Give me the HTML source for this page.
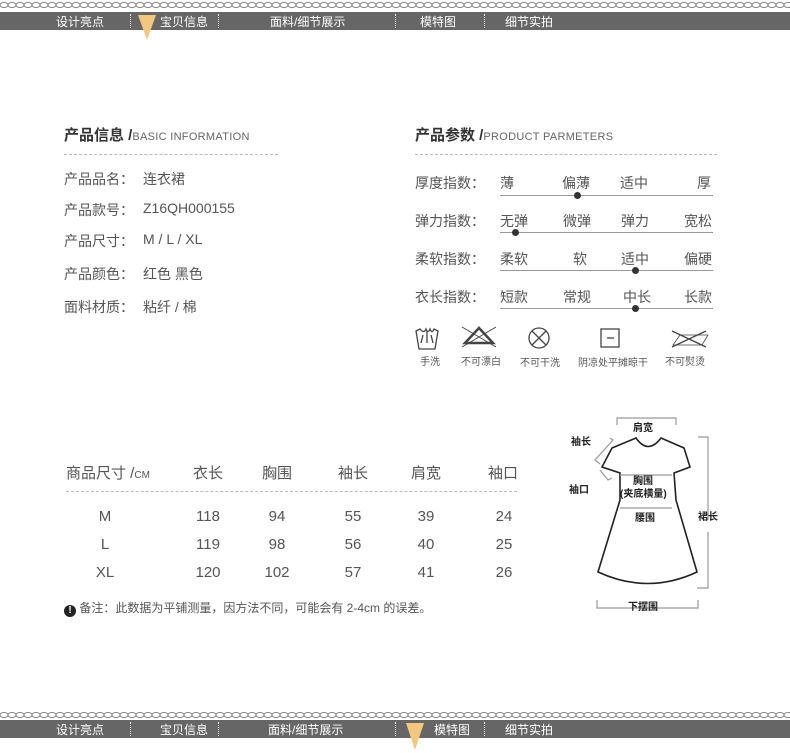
<!DOCTYPE html><html><head><meta charset="utf-8"><style>
body{margin:0;width:790px;height:753px;background:#fff;position:relative;overflow:hidden;font-family:"Liberation Sans","Noto Sans CJK SC",sans-serif;color:#555}
.a{position:absolute;white-space:nowrap}
.bar{position:absolute;left:0;width:790px;height:18px;background:#666;color:#fff;font-size:12px}
.bar span{position:absolute;top:1px}
.sep{position:absolute;top:2px;height:14px;border-left:1px dotted #eee}
.t14{font-size:14px}
.h{font-size:15px;font-weight:bold;color:#333}
.h small{font-size:11px;font-weight:normal;color:#666;letter-spacing:.3px}
.dash{position:absolute;border-top:1px dashed #bbb;height:0}
.ln{position:absolute;height:1px;background:#999;left:500px;width:213px}
.dot{position:absolute;width:7px;height:7px;border-radius:50%;background:#333}
.c{position:absolute;text-align:center;width:60px;font-size:15px}
.v{position:absolute;left:79px;top:0}
</style></head><body>
<svg class="a" style="left:0;top:0" width="790" height="11"><defs><pattern id="ch" width="8" height="10" patternUnits="userSpaceOnUse"><ellipse cx="4" cy="5" rx="4" ry="2.6" fill="none" stroke="#888" stroke-width="1"/></pattern></defs><rect width="790" height="11" fill="url(#ch)"/></svg>
<div class="bar" style="top:12px"><span style="left:56px">设计亮点</span><i class="sep" style="left:130px"></i><span style="left:160px">宝贝信息</span><i class="sep" style="left:218px"></i><span style="left:270px">面料/细节展示</span><i class="sep" style="left:395px"></i><span style="left:420px">模特图</span><i class="sep" style="left:484px"></i><span style="left:505px">细节实拍</span></div>
<svg class="a" style="left:136px;top:12px" width="22" height="30"><polygon points="2,3 20,3 11,28" fill="#f3c77e"/></svg>

<div class="a h" style="left:64px;top:124px">产品信息 /<small>BASIC INFORMATION</small></div>
<div class="dash" style="left:64px;top:154px;width:214px"></div>
<div class="a t14" style="left:64px;top:169px;width:300px">产品品名：<span class="v">连衣裙</span></div>
<div class="a t14" style="left:64px;top:200px;width:300px">产品款号：<span class="v">Z16QH000155</span></div>
<div class="a t14" style="left:64px;top:231px;width:300px">产品尺寸：<span class="v">M / L / XL</span></div>
<div class="a t14" style="left:64px;top:264px;width:300px">产品颜色：<span class="v">红色 黑色</span></div>
<div class="a t14" style="left:64px;top:297px;width:300px">面料材质：<span class="v">粘纤 / 棉</span></div>

<div class="a h" style="left:415px;top:124px">产品参数 /<small>PRODUCT PARMETERS</small></div>
<div class="dash" style="left:415px;top:154px;width:302px"></div>
<div class="a t14" style="left:415px;top:173px">厚度指数：</div><div class="a t14" style="left:500px;top:173px">薄</div><div class="a t14" style="left:562px;top:173px">偏薄</div><div class="a t14" style="left:620px;top:173px">适中</div><div class="a t14" style="left:697px;top:173px">厚</div>
<div class="ln" style="top:195px"></div><div class="dot" style="left:574px;top:192px"></div>
<div class="a t14" style="left:415px;top:211px">弹力指数：</div><div class="a t14" style="left:500px;top:211px">无弹</div><div class="a t14" style="left:563px;top:211px">微弹</div><div class="a t14" style="left:621px;top:211px">弹力</div><div class="a t14" style="left:684px;top:211px">宽松</div>
<div class="ln" style="top:232px"></div><div class="dot" style="left:512px;top:229px"></div>
<div class="a t14" style="left:415px;top:249px">柔软指数：</div><div class="a t14" style="left:500px;top:249px">柔软</div><div class="a t14" style="left:573px;top:249px">软</div><div class="a t14" style="left:621px;top:249px">适中</div><div class="a t14" style="left:684px;top:249px">偏硬</div>
<div class="ln" style="top:270px"></div><div class="dot" style="left:632px;top:267px"></div>
<div class="a t14" style="left:415px;top:287px">衣长指数：</div><div class="a t14" style="left:500px;top:287px">短款</div><div class="a t14" style="left:563px;top:287px">常规</div><div class="a t14" style="left:623px;top:287px">中长</div><div class="a t14" style="left:684px;top:287px">长款</div>
<div class="ln" style="top:308px"></div><div class="dot" style="left:632px;top:305px"></div>

<svg class="a" style="left:410px;top:325px" width="310" height="45" fill="none" stroke="#444" stroke-width="1.3">
<path d="M6,6 L10,4 Q14,9 16,4 Q18,9 20,4 Q22,9 24,4 L28,6 L25,24 H9 Z"/><path d="M17,6 V18 M13,10 L11,18 M21,10 L23,18"/>
<path d="M55,18 L69,3 L83,18 Z" stroke-width="2.5"/><path d="M52,2 L86,22 M52,22 L86,2" stroke-width="1"/>
<circle cx="129" cy="13" r="10"/><path d="M122,6 L136,20 M136,6 L122,20"/>
<rect x="191" y="4" width="18" height="18"/><path d="M197,13 H204"/>
<path d="M263,20 L270,10 H298 L292,20 Z" stroke-width="0.8"/><path d="M262,6 L296,22 M262,22 L296,6"/>
</svg>
<div class="a" style="font-size:10px;left:420px;top:353px">手洗</div>
<div class="a" style="font-size:10px;left:461px;top:353px">不可漂白</div>
<div class="a" style="font-size:10px;left:520px;top:354px">不可干洗</div>
<div class="a" style="font-size:10px;left:578px;top:354px">阴凉处平摊晾干</div>
<div class="a" style="font-size:10px;left:665px;top:353px">不可熨烫</div>

<div class="a" style="left:66px;top:462px;font-size:15px">商品尺寸 /<span style="font-size:10px">CM</span></div>
<div class="c" style="left:178px;top:462px">衣长</div><div class="c" style="left:247px;top:462px">胸围</div><div class="c" style="left:323px;top:462px">袖长</div><div class="c" style="left:396px;top:462px">肩宽</div><div class="c" style="left:473px;top:462px">袖口</div>
<div class="dash" style="left:66px;top:491px;width:451px"></div>
<div class="c" style="left:75px;top:508px">M</div><div class="c" style="left:178px;top:508px">118</div><div class="c" style="left:247px;top:508px">94</div><div class="c" style="left:323px;top:508px">55</div><div class="c" style="left:396px;top:508px">39</div><div class="c" style="left:474px;top:508px">24</div>
<div class="c" style="left:75px;top:536px">L</div><div class="c" style="left:178px;top:536px">119</div><div class="c" style="left:247px;top:536px">98</div><div class="c" style="left:323px;top:536px">56</div><div class="c" style="left:396px;top:536px">40</div><div class="c" style="left:474px;top:536px">25</div>
<div class="c" style="left:75px;top:564px">XL</div><div class="c" style="left:178px;top:564px">120</div><div class="c" style="left:247px;top:564px">102</div><div class="c" style="left:323px;top:564px">57</div><div class="c" style="left:396px;top:564px">41</div><div class="c" style="left:474px;top:564px">26</div>
<div class="a" style="left:64px;top:599px;font-size:12px"><span style="display:inline-block;width:12px;height:12px;border-radius:50%;background:#222;color:#fff;font-size:10px;text-align:center;line-height:12px;font-weight:bold;vertical-align:-1px">!</span> 备注：此数据为平铺测量，因方法不同，可能会有 2-4cm 的误差。</div>

<svg class="a" style="left:560px;top:410px" width="170" height="210" fill="none" stroke="#222" stroke-width="1.6" font-family="Liberation Sans,Noto Sans CJK SC,sans-serif" font-size="10" font-weight="bold">
<path d="M76,28 Q88,45 101,28 L124,38 L130,57 L114,63 L116,90 L137,162 Q88,185 38,162 L60,90 L60,63 L42,57 L52,38 Z"/>
<g stroke="#999" stroke-width="1.2"><path d="M57,15 V8 H116 V15"/><path d="M60,65 H112 M60,98 H112"/><path d="M50,28 L53,30 L35,50 L40,54"/><path d="M40,60 L48,70 L52,68"/><path d="M138,27 H148 V110 M148,122 V178 H137"/><path d="M37,190 V198 H138 V190"/></g>
<g fill="#222" stroke="none"><text x="73" y="21">肩宽</text><text x="11" y="35">袖长</text><text x="9" y="83">袖口</text><text x="73" y="74">胸围</text><text x="60" y="87">(夹底横量)</text><text x="75" y="111">腰围</text><text x="138" y="110">裙长</text><text x="68" y="200">下摆围</text></g>
</svg>

<svg class="a" style="left:0;top:710px" width="790" height="11"><rect width="790" height="11" fill="url(#ch)"/></svg>
<div class="bar" style="top:720px"><span style="left:56px">设计亮点</span><i class="sep" style="left:130px"></i><span style="left:160px">宝贝信息</span><i class="sep" style="left:218px"></i><span style="left:268px">面料/细节展示</span><i class="sep" style="left:395px"></i><span style="left:434px">模特图</span><i class="sep" style="left:484px"></i><span style="left:505px">细节实拍</span></div>
<svg class="a" style="left:404px;top:720px" width="22" height="32"><polygon points="2,3 20,3 11,30" fill="#f3c77e"/></svg>
</body></html>
